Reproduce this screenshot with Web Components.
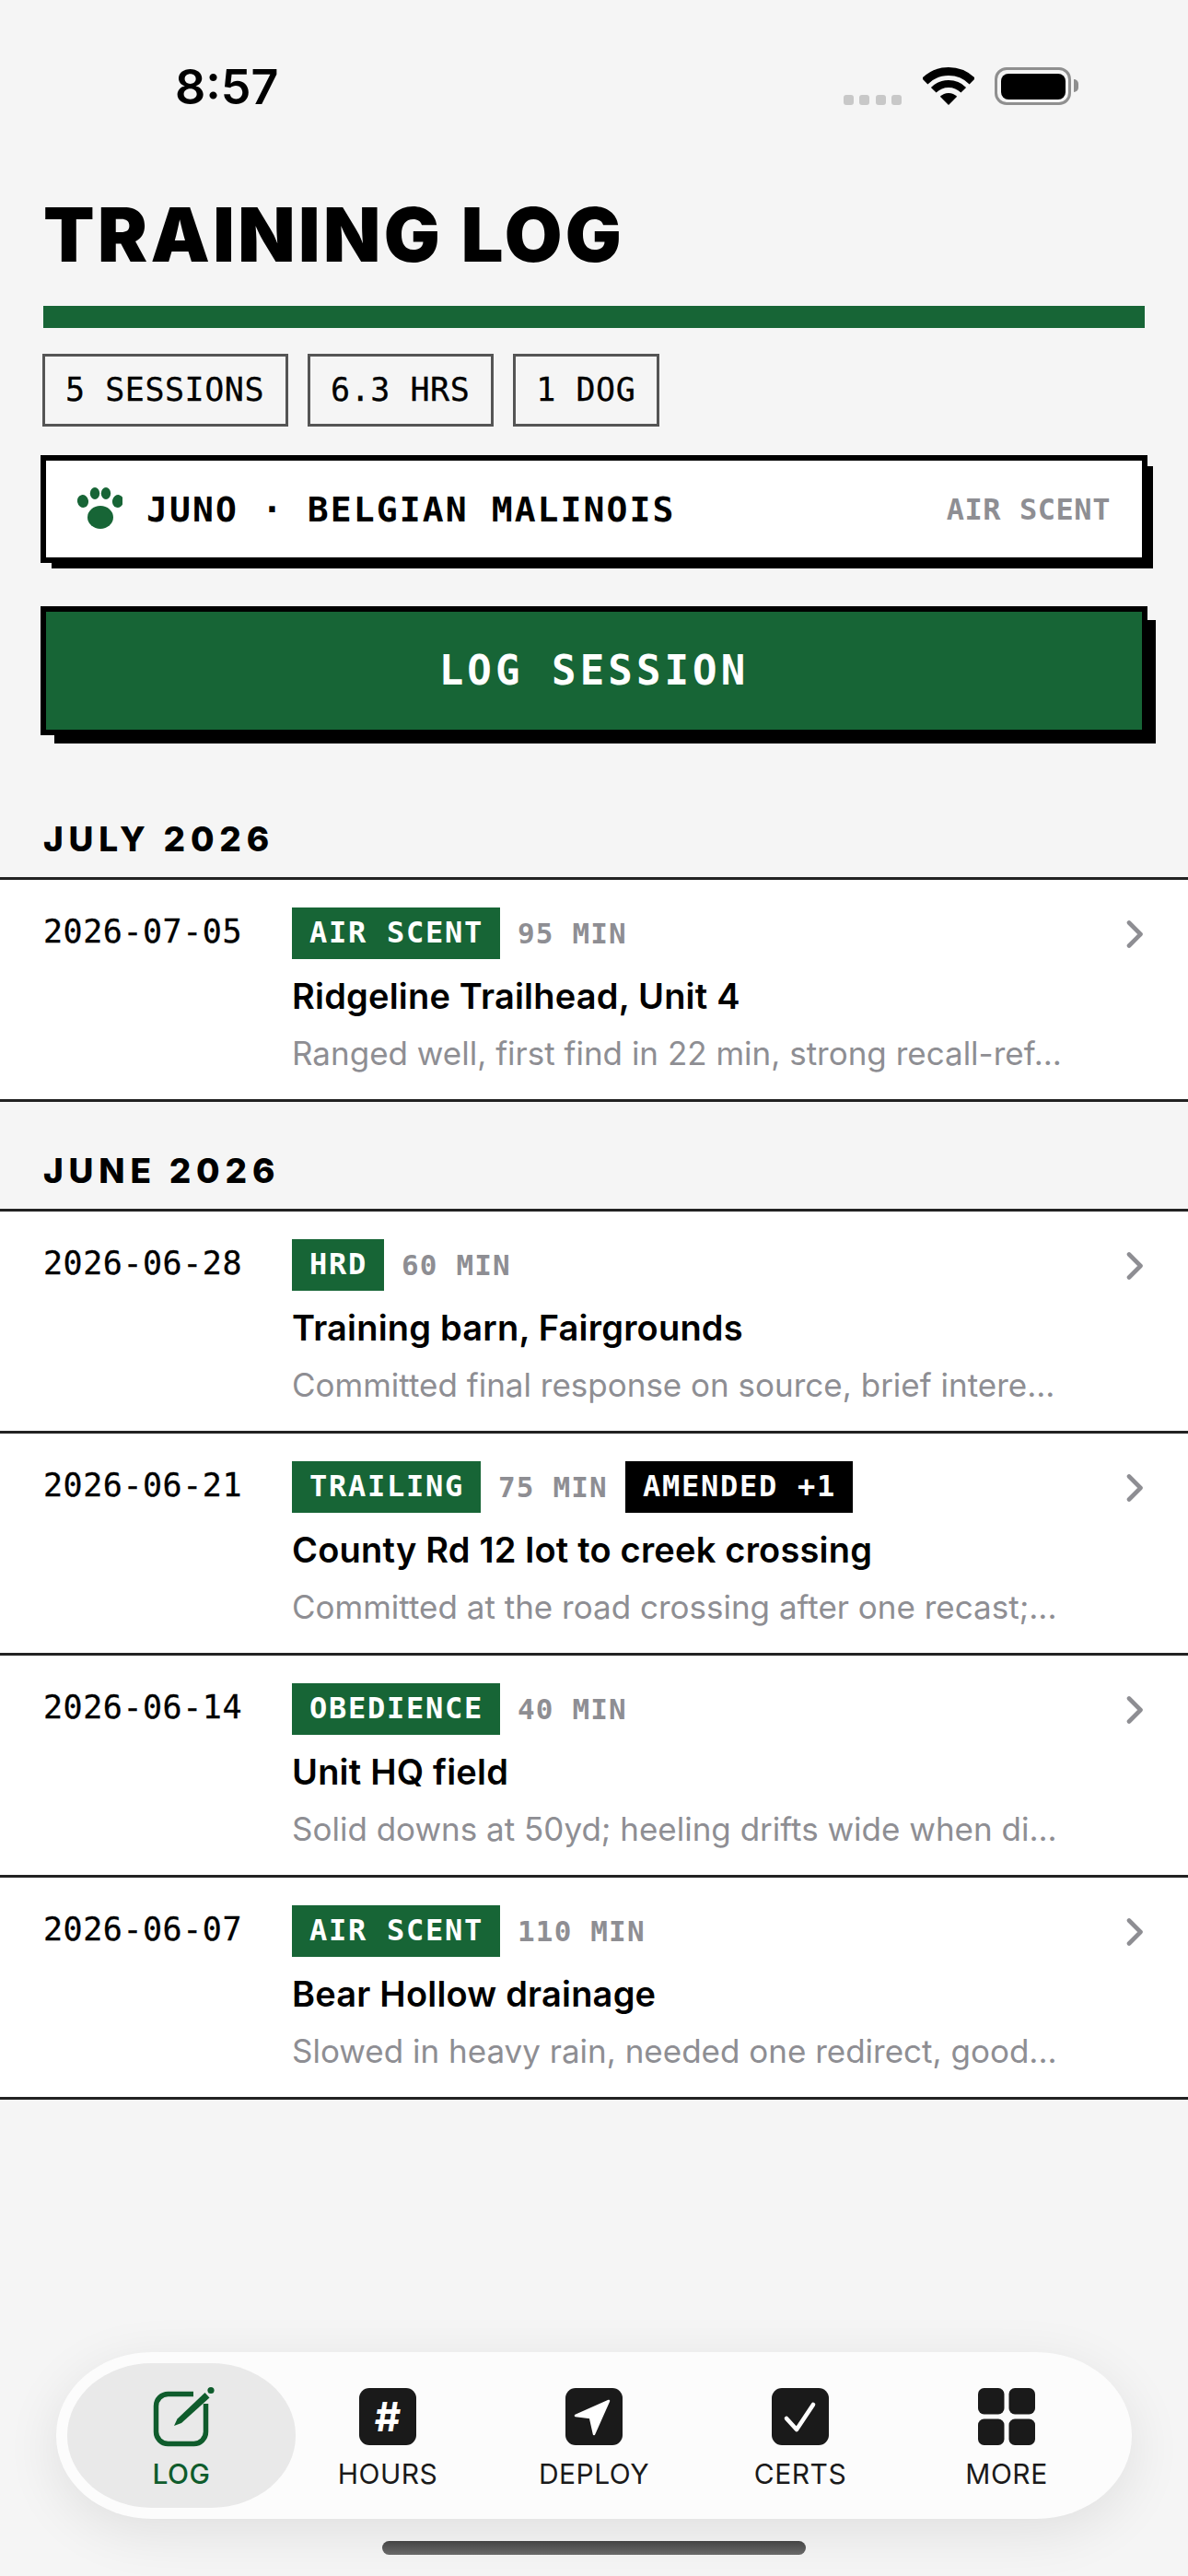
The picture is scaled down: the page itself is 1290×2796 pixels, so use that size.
<!DOCTYPE html>
<html lang="en">
<head>
<meta charset="utf-8">
<title>Training Log</title>
<style>
  html, body { margin: 0; padding: 0; background: #f5f5f5; }
  body { width: 1290px; height: 2796px; overflow: hidden; font-family: 'Inter', sans-serif; }
</style>
</head>
<body>
<log-app>
  <status-bar time="8:57"></status-bar>
  <log-header title="TRAINING LOG"></log-header>
  <div slot="stats">
    <stat-chip>5 SESSIONS</stat-chip>
    <stat-chip>6.3 HRS</stat-chip>
    <stat-chip>1 DOG</stat-chip>
  </div>
  <dog-card slot="dog" discipline="AIR SCENT">JUNO · BELGIAN MALINOIS</dog-card>
  <log-button slot="action">LOG SESSION</log-button>

  <log-section slot="list" heading="JULY 2026">
    <log-row date="2026-07-05" tag="AIR SCENT" mins="95 MIN" title="Ridgeline Trailhead, Unit 4" note="Ranged well, first find in 22 min, strong recall-ref..."></log-row>
  </log-section>
  <log-section slot="list" heading="JUNE 2026">
    <log-row date="2026-06-28" tag="HRD" mins="60 MIN" title="Training barn, Fairgrounds" note="Committed final response on source, brief intere..."></log-row>
    <log-row date="2026-06-21" tag="TRAILING" mins="75 MIN" amended="AMENDED +1" title="County Rd 12 lot to creek crossing" note="Committed at the road crossing after one recast;..."></log-row>
    <log-row date="2026-06-14" tag="OBEDIENCE" mins="40 MIN" title="Unit HQ field" note="Solid downs at 50yd; heeling drifts wide when di..."></log-row>
    <log-row date="2026-06-07" tag="AIR SCENT" mins="110 MIN" title="Bear Hollow drainage" note="Slowed in heavy rain, needed one redirect, good..."></log-row>
  </log-section>

  <tab-bar slot="tabs">
    <tab-item active label="LOG">
      <svg width="75" height="72" viewBox="0 0 75 72" fill="none">
        <path d="M50 11.5H22.5a13 13 0 0 0-13 13V52.5a13 13 0 0 0 13 13H50.5a13 13 0 0 0 13-13V22" stroke="currentColor" stroke-width="5.5"/>
        <path d="M29 46L32.5 38.5L62.5 10L67.5 15.5L37 43Z" fill="currentColor"/>
        <circle cx="69" cy="7.5" r="3.6" fill="currentColor"/>
      </svg>
    </tab-item>
    <tab-item label="HOURS"><span class="tile hash">#</span></tab-item>
    <tab-item label="DEPLOY">
      <svg width="62" height="62" viewBox="0 0 62 62">
        <rect width="62" height="62" rx="11" fill="#1a1a1a"/>
        <path d="M47 14L11 30L27 32L31 50Z" fill="#fff" stroke="#fff" stroke-width="2.5" stroke-linejoin="round"/>
      </svg>
    </tab-item>
    <tab-item label="CERTS">
      <svg width="62" height="62" viewBox="0 0 62 62">
        <rect width="62" height="62" rx="11" fill="#1a1a1a"/>
        <path d="M16 33L27 45L45 18" fill="none" stroke="#fff" stroke-width="4.6" stroke-linecap="round" stroke-linejoin="round"/>
      </svg>
    </tab-item>
    <tab-item label="MORE">
      <svg width="62" height="62" viewBox="0 0 62 62" fill="#1a1a1a">
        <rect x="0" y="0" width="28.5" height="28.5" rx="6.5"/>
        <rect x="33.5" y="0" width="28.5" height="28.5" rx="6.5"/>
        <rect x="0" y="33.5" width="28.5" height="28.5" rx="6.5"/>
        <rect x="33.5" y="33.5" width="28.5" height="28.5" rx="6.5"/>
      </svg>
    </tab-item>
  </tab-bar>
</log-app>

<script>
// ── tiny helper: every element gets an open shadow root from a string
class Base extends HTMLElement {
  render(html) {
    if (!this.shadowRoot) this.attachShadow({ mode: 'open' });
    this.shadowRoot.innerHTML = html;
  }
  attr(name) { return this.getAttribute(name) || ''; }
}

const MONO = `'DejaVu Sans Mono', 'Liberation Mono', monospace`;
const GREEN = '#176536';

// ── PAGE SHELL ───
class LogApp extends Base {
  connectedCallback() {
    this.render(`
      <style>
        :host { display: flex; flex-direction: column; width: 1290px; height: 2796px; color: #000; }
        .top { padding: 0 44px; display: flex; flex-direction: column; }
        .stats ::slotted(div) { display: flex; gap: 21px; padding: 0 2px; }
        .stats { margin-top: 28px; }
        .dog { margin-top: 31px; }
        .action { margin-top: 47px; }
        .list { margin-top: 84px; flex: 1; }
        .bottom { display: flex; justify-content: center; padding-bottom: 23px; flex-direction: column; align-items: center; }
        .home { width: 460px; height: 15px; margin-top: 24px; border-radius: 8px; background: linear-gradient(#444, #6a6a6a); }
      </style>
      <slot></slot>
      <div class="top">
        <div class="stats"><slot name="stats"></slot></div>
        <div class="dog"><slot name="dog"></slot></div>
        <div class="action"><slot name="action"></slot></div>
      </div>
      <div class="list"><slot name="list"></slot></div>
      <div class="bottom">
        <slot name="tabs"></slot>
        <div class="home"></div>
      </div>
    `);
  }
}

// ── STATUS BAR ───
class StatusBar extends Base {
  connectedCallback() {
    this.render(`
      <style>
        :host { display: flex; justify-content: space-between; align-items: flex-start; padding: 65px 127px 0 190px; height: 59px; }
        .time { font: 600 52px/60px 'Inter', sans-serif; color: #000; }
        .icons { display: flex; align-items: flex-end; padding-top: 8px; }
        .dots { display: flex; gap: 6.5px; margin-right: 23px; }
        .dots i { width: 11px; height: 11px; border-radius: 3px; background: #c8c8c8; }
        .wifi { display: block; margin-right: 22px; }
        .batt { position: relative; box-sizing: border-box; width: 83px; height: 41px; border: 3.5px solid #8f8f8f; border-radius: 13px; padding: 3.5px; }
        .batt b { display: block; height: 100%; background: #000; border-radius: 8px; }
        .batt::after { content: ''; position: absolute; right: -11px; top: 10px; width: 5px; height: 14px; background: #8f8f8f; border-radius: 0 7px 7px 0; }
      </style>
      <div class="time">${this.attr('time')}</div>
      <div class="icons">
        <div class="dots"><i></i><i></i><i></i><i></i></div>
        <svg class="wifi" width="56" height="41" viewBox="0 0 56 41">
          <path d="M2.2 15.2A36.5 36.5 0 0 1 53.8 15.2" fill="none" stroke="#000" stroke-width="9"/>
          <path d="M11.74 24.74A23 23 0 0 1 44.26 24.74" fill="none" stroke="#000" stroke-width="8"/>
          <path d="M28 41L18.8 31.8A13 13 0 0 1 37.2 31.8Z" fill="#000"/>
        </svg>
        <div class="batt"><b></b></div>
      </div>
    `);
  }
}

// ── HEADER ───
class LogHeader extends Base {
  connectedCallback() {
    this.render(`
      <style>
        :host { display: block; padding: 0 47px; }
        h1 { margin: 81px 0 0; font: 900 81px/100px 'Inter', sans-serif; letter-spacing: 3.4px; color: #000; }
        .bar { height: 24px; margin-top: 27px; background: ${GREEN}; }
      </style>
      <h1>${this.attr('title')}</h1>
      <div class="bar"></div>
    `);
  }
}

class StatChip extends Base {
  connectedCallback() {
    this.render(`
      <style>
        :host {
          display: block; box-sizing: border-box; height: 79px; padding: 0 23px 0 22px;
          border: 3px solid #555; font: 400 35px/73px ${MONO}; letter-spacing: 0.53px; color: #000;
          -webkit-text-stroke: 0.3px #000;
        }
        span { white-space: pre; }
      </style>
      <span><slot></slot></span>
    `);
  }
}

// ── DOG CARD ───
class DogCard extends Base {
  connectedCallback() {
    this.render(`
      <style>
        :host {
          display: flex; align-items: center; box-sizing: border-box; height: 117px;
          padding: 0 34px; border: 6px solid #000; background: #fff;
          box-shadow: 9px 9px 0 -3px #000;
        }
        svg { display: block; margin-right: 26px; margin-top: -2px; }
        .name { flex: 1; font: 700 38px/1 ${MONO}; letter-spacing: 2.1px; color: #000; white-space: pre; }
        .disc { font: 700 32px/1 ${MONO}; letter-spacing: 0.55px; color: #8e8e93; }
      </style>
      <svg width="49" height="45" viewBox="0 0 49 45" fill="${GREEN}">
        <ellipse cx="25" cy="32.5" rx="14" ry="12.5"/>
        <ellipse cx="6" cy="15" rx="6" ry="7" transform="rotate(-12 6 15)"/>
        <ellipse cx="19" cy="6.5" rx="5.2" ry="6.5"/>
        <ellipse cx="31" cy="6.5" rx="5.2" ry="6.5"/>
        <ellipse cx="44" cy="15" rx="6" ry="7" transform="rotate(12 44 15)"/>
      </svg>
      <div class="name"><slot></slot></div>
      <div class="disc">${this.attr('discipline')}</div>
    `);
  }
}

class LogButton extends Base {
  connectedCallback() {
    this.render(`
      <style>
        :host {
          display: flex; align-items: center; justify-content: center; box-sizing: border-box; height: 140px;
          border: 6px solid #000; background: ${GREEN}; color: #fff;
          box-shadow: 12px 12px 0 -3px #000;
          font: 700 44px/1 ${MONO}; letter-spacing: 4.1px;
        }
      </style>
      <slot></slot>
    `);
  }
}

// ── LOG LIST ───
class LogSection extends Base {
  connectedCallback() {
    this.render(`
      <style>
        :host { display: block; margin-bottom: 46px; }
        h2 { margin: 0; padding: 0 47px; height: 70px; font: 800 37px/58px 'Inter', sans-serif; letter-spacing: 5.8px; color: #000; }
        .rows { border-top: 3px solid #222; }
      </style>
      <h2>${this.attr('heading')}</h2>
      <div class="rows"><slot></slot></div>
    `);
  }
}

class LogRow extends Base {
  connectedCallback() {
    const amended = this.attr('amended');
    this.render(`
      <style>
        :host {
          display: grid; grid-template-columns: 270px 1fr 50px; box-sizing: border-box; height: 241px;
          padding: 30px 47px 0 47px; background: #fff; border-bottom: 3px solid #222;
        }
        .date { font: 400 35px/53px ${MONO}; letter-spacing: 0.53px; color: #000; -webkit-text-stroke: 0.3px #000; }
        .meta { display: flex; align-items: center; height: 56px; white-space: pre; }
        .tag {
          height: 56px; padding: 0 18px 0 19px; box-sizing: border-box; background: ${GREEN}; color: #fff;
          font: 700 32px/55px ${MONO}; letter-spacing: 1.74px;
        }
        .tag.black { background: #000; }
        .mins { margin: 0 19px 0 19px; font: 700 31px/55px ${MONO}; letter-spacing: 1.14px; color: #8e8e93; }
        .title { margin-top: 16px; font: 600 38px/48px 'Inter', sans-serif; letter-spacing: 0.2px; color: #000; white-space: nowrap; }
        .note { margin-top: 16px; font: 400 35px/44px 'Inter', sans-serif; letter-spacing: 0; color: #8e8e93; white-space: nowrap; }
        svg { display: block; margin: 14px 0 0 auto; }
      </style>
      <div class="date">${this.attr('date')}</div>
      <div>
        <div class="meta">
          <span class="tag">${this.attr('tag')}</span>
          <span class="mins">${this.attr('mins')}</span>
          ${amended ? `<span class="tag black">${amended}</span>` : ''}
        </div>
        <div class="title">${this.attr('title')}</div>
        <div class="note">${this.attr('note')}</div>
      </div>
      <svg width="20" height="30" viewBox="0 0 20 30" fill="none">
        <path d="M3 2.5L15.5 15L3 27.5" stroke="#8e8e93" stroke-width="4.6" stroke-linecap="round" stroke-linejoin="round"/>
      </svg>
    `);
  }
}

// ── TAB BAR ───
class TabBar extends Base {
  connectedCallback() {
    this.render(`
      <style>
        :host {
          display: grid; grid-template-columns: repeat(5, 224px); box-sizing: border-box;
          width: 1168px; height: 181px; padding: 0 24px;
          background: #fcfcfc; border-radius: 104px / 90px;
          box-shadow: 0 14px 60px rgba(0,0,0,0.09);
        }
      </style>
      <slot></slot>
    `);
  }
}

class TabItem extends Base {
  connectedCallback() {
    const active = this.hasAttribute('active');
    this.render(`
      <style>
        :host {
          position: relative; display: flex; flex-direction: column; align-items: center;
          padding-top: 39px; box-sizing: border-box; height: 181px;
          color: ${active ? '#0f5c2c' : '#1a1a1a'};
        }
        :host([active])::before {
          content: ''; position: absolute; left: -12px; right: -12px; top: 12px; bottom: 12px;
          background: #e9e9e9; border-radius: 92px / 78px;
        }
        .icon { position: relative; height: 62px; display: flex; align-items: center; justify-content: center; }
        .label { position: relative; margin-top: 13px; font: ${active ? 500 : 400} 30px/36px 'Inter', sans-serif; letter-spacing: 0.5px; }
        ::slotted(svg) { display: block; }
        ::slotted(.tile) {
          display: block; width: 62px; height: 62px; border-radius: 11px; background: #1a1a1a; color: #fff;
          font: 700 44px/62px 'Inter', sans-serif; text-align: center;
        }
      </style>
      <div class="icon"><slot></slot></div>
      <div class="label">${this.attr('label')}</div>
    `);
  }
}

customElements.define('log-app', LogApp);
customElements.define('status-bar', StatusBar);
customElements.define('log-header', LogHeader);
customElements.define('stat-chip', StatChip);
customElements.define('dog-card', DogCard);
customElements.define('log-button', LogButton);
customElements.define('log-section', LogSection);
customElements.define('log-row', LogRow);
customElements.define('tab-bar', TabBar);
customElements.define('tab-item', TabItem);
</script>
</body>
</html>
